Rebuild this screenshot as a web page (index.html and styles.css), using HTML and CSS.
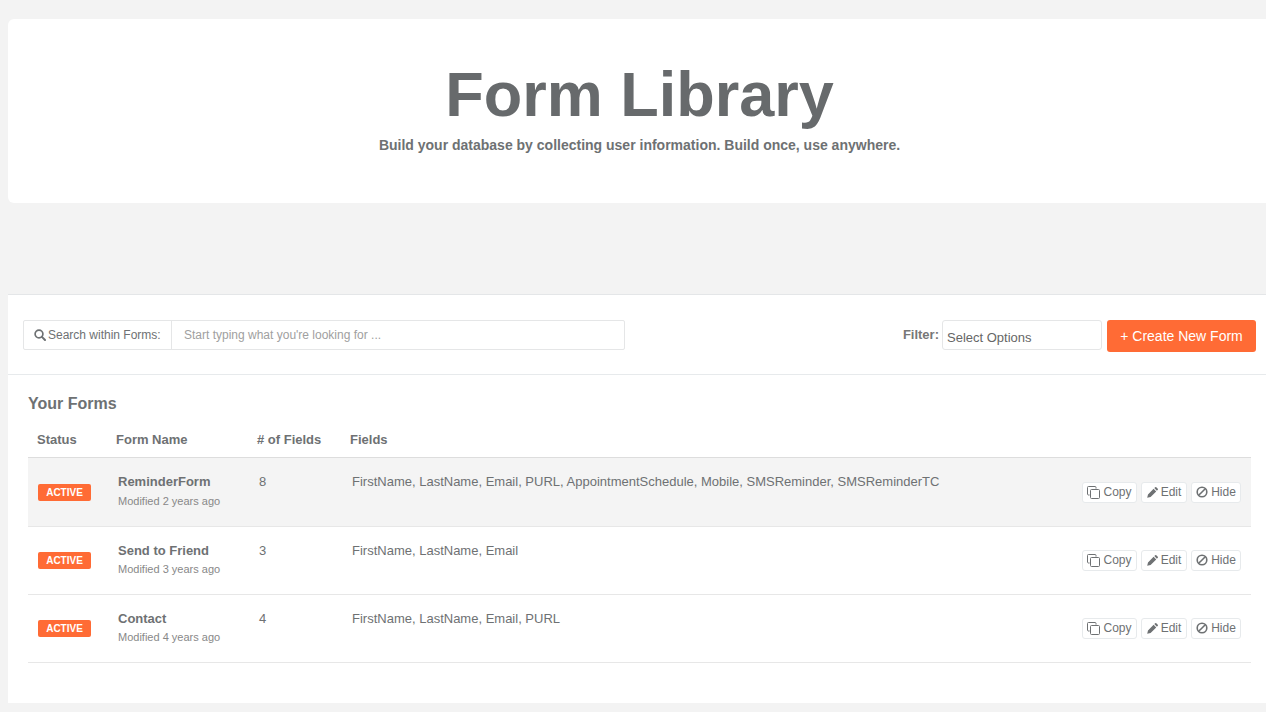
FILE: index.html
```html
<!DOCTYPE html>
<html lang="en">
<head>
<meta charset="utf-8">
<title>Form Library</title>
<link rel="stylesheet" href="styles.css">
</head>
<body>
<svg class="sprites" width="0" height="0" aria-hidden="true">
  <symbol id="i-search" viewBox="0 0 12 12"><circle cx="5" cy="5" r="3.9" fill="none" stroke="currentColor" stroke-width="1.7"/><path d="M7.9 7.9 11 11" fill="none" stroke="currentColor" stroke-width="2" stroke-linecap="round"/></symbol>
  <symbol id="i-copy" viewBox="0 0 13 13"><path d="M9 2.6V1.4a.9.9 0 0 0-.9-.9H1.4a.9.9 0 0 0-.9.9v6.7c0 .5.4.9.9.9h1.2" fill="none" stroke="currentColor"/><rect x="3.5" y="3.5" width="9" height="9" rx="1" fill="none" stroke="currentColor"/></symbol>
  <symbol id="i-edit" viewBox="0 0 12 12"><path d="M8.2 1.2a.8.8 0 0 1 1.1 0l1.5 1.5a.8.8 0 0 1 0 1.1L9.9 4.7 7.3 2.1zM6.6 2.8l2.6 2.6-5.6 5.6-3.4.8.8-3.4z" fill="currentColor"/></symbol>
  <symbol id="i-ban" viewBox="0 0 12 12"><circle cx="6" cy="6" r="4.8" fill="none" stroke="currentColor" stroke-width="1.6"/><path d="M2.7 9.3 9.3 2.7" stroke="currentColor" stroke-width="1.6"/></symbol>
</svg>
<div class="page">
  <header class="hero">
    <h1 class="hero-title">Form Library</h1>
    <p class="hero-sub">Build your database by collecting user information. Build once, use anywhere.</p>
  </header>
  <main class="panel">
    <div class="toolbar">
      <div class="search">
        <label class="search-label"><svg class="ico ico-search"><use href="#i-search"/></svg>Search within Forms:</label>
        <input class="search-input" type="text" placeholder="Start typing what you're looking for ...">
      </div>
      <div class="toolbar-right">
        <span class="filter-label">Filter:</span>
        <div class="filter-select">Select Options</div>
        <button class="create-btn">+ Create New Form</button>
      </div>
    </div>
    <section class="forms">
      <h2 class="forms-title">Your Forms</h2>
      <table class="forms-table">
        <colgroup><col class="c-status"><col class="c-name"><col class="c-count"><col class="c-fields"><col class="c-actions"></colgroup>
        <thead>
          <tr><th>Status</th><th>Form Name</th><th># of Fields</th><th>Fields</th><th></th></tr>
        </thead>
        <tbody>
          <tr class="row-hover">
            <td class="cell-status"><span class="badge">ACTIVE</span></td>
            <td class="cell-name"><div class="form-name">ReminderForm</div><div class="form-mod">Modified 2 years ago</div></td>
            <td class="cell-text">8</td>
            <td class="cell-text">FirstName, LastName, Email, PURL, AppointmentSchedule, Mobile, SMSReminder, SMSReminderTC</td>
            <td class="cell-actions"><div class="actions">
              <button class="act act-copy"><svg class="ico ico-copy"><use href="#i-copy"/></svg>Copy</button>
              <button class="act act-edit"><svg class="ico"><use href="#i-edit"/></svg>Edit</button>
              <button class="act act-hide"><svg class="ico"><use href="#i-ban"/></svg>Hide</button>
            </div></td>
          </tr>
          <tr>
            <td class="cell-status"><span class="badge">ACTIVE</span></td>
            <td class="cell-name"><div class="form-name">Send to Friend</div><div class="form-mod">Modified 3 years ago</div></td>
            <td class="cell-text">3</td>
            <td class="cell-text">FirstName, LastName, Email</td>
            <td class="cell-actions"><div class="actions">
              <button class="act act-copy"><svg class="ico ico-copy"><use href="#i-copy"/></svg>Copy</button>
              <button class="act act-edit"><svg class="ico"><use href="#i-edit"/></svg>Edit</button>
              <button class="act act-hide"><svg class="ico"><use href="#i-ban"/></svg>Hide</button>
            </div></td>
          </tr>
          <tr>
            <td class="cell-status"><span class="badge">ACTIVE</span></td>
            <td class="cell-name"><div class="form-name">Contact</div><div class="form-mod">Modified 4 years ago</div></td>
            <td class="cell-text">4</td>
            <td class="cell-text">FirstName, LastName, Email, PURL</td>
            <td class="cell-actions"><div class="actions">
              <button class="act act-copy"><svg class="ico ico-copy"><use href="#i-copy"/></svg>Copy</button>
              <button class="act act-edit"><svg class="ico"><use href="#i-edit"/></svg>Edit</button>
              <button class="act act-hide"><svg class="ico"><use href="#i-ban"/></svg>Hide</button>
            </div></td>
          </tr>
        </tbody>
      </table>
    </section>
  </main>
</div>
</body>
</html>
```
FILE: styles.css
```css
* { box-sizing: border-box; }
html, body { margin: 0; height: 712px; overflow: hidden; }
body { background: #f3f3f3; font-family: "Liberation Sans", Arial, sans-serif; color: #6e7173; }
.sprites { position: absolute; }
.page { width: 1266px; height: 712px; padding: 19px 0 0 8px; overflow: hidden; }

.hero { width: 1263px; height: 184px; background: #fff; border-radius: 6px; text-align: center; padding-top: 37px; }
.hero-title { margin: 0; font-size: 63px; line-height: 76px; font-weight: 700; color: #676a6c; }
.hero-sub { margin: 5px 0 0; font-size: 14px; line-height: 17px; font-weight: 700; }

.panel { width: 1258px; height: 409px; margin-top: 91px; background: #fff; border-top: 1px solid #e4e6e8; }
.toolbar { height: 80px; display: flex; justify-content: space-between; align-items: flex-start; padding: 25px 10px 0 15px; border-bottom: 1px solid #e7eaec; }
.search { display: flex; width: 602px; height: 30px; border: 1px solid #e5e6e7; border-radius: 2px; }
.search-label { width: 148px; flex: none; display: flex; align-items: center; padding-left: 10px; font-size: 12px; color: #6e7173; border-right: 1px solid #e5e6e7; }
.search-input { flex: 1; min-width: 0; border: 0; outline: 0; padding: 0 12px; font: 12px "Liberation Sans", Arial, sans-serif; background: transparent; }
.search-input::placeholder { color: #a0a0a0; opacity: 1; }
.ico { width: 12px; height: 12px; margin-right: 3px; flex: none; vertical-align: -2px; }
.ico-search { margin-right: 2px; }
.ico-copy { width: 13px; height: 13px; }
.act-edit .ico { margin-right: 2px; }

.toolbar-right { display: flex; align-items: flex-start; }
.filter-label { font-size: 13px; font-weight: 700; line-height: 30px; margin-right: 3px; color: #777; }
.filter-select { width: 160px; height: 30px; border: 1px solid #e5e6e7; border-radius: 3px; padding: 0 4px; font-size: 13px; line-height: 33px; color: #666; }
.create-btn { width: 149px; height: 32px; margin-left: 5px; background: #ff6b35; border: 0; border-radius: 3px; color: #fff; font: 14px "Liberation Sans", Arial, sans-serif; padding: 0; }

.forms { padding: 0 7px 0 20px; }
.forms-title { margin: 19px 0 0; font-size: 16px; line-height: 20px; font-weight: 700; color: #6e7173; }
.forms-table { width: 1223px; margin-top: 12px; border-collapse: collapse; table-layout: fixed; font-size: 13px; }
.c-status { width: 79px; }
.c-name { width: 141px; }
.c-count { width: 93px; }
.c-fields { width: 700px; }
.forms-table th { height: 31px; padding: 0 0 4px 9px; text-align: left; font-size: 13px; font-weight: 700; color: #6e7173; border-bottom: 1px solid #ddd; }
.forms-table td { height: 68px; padding: 0; vertical-align: top; border-bottom: 1px solid #e7e7e7; }
.forms-table .row-hover td { height: 69px; background: #f4f4f4; }
.cell-status { padding: 25px 0 0 10px !important; }
.row-hover .cell-status { padding-top: 26px !important; }
.badge { display: block; width: 53px; height: 17px; background: #ff6b35; border-radius: 2px; color: #fff; font-size: 10px; line-height: 17px; font-weight: 700; text-align: center; }
.cell-name { padding: 15px 0 0 11px !important; }
.form-name { font-size: 13px; line-height: 17px; font-weight: 700; }
.form-mod { margin-top: 3px; font-size: 11px; line-height: 14px; color: #888; }
.row-hover .form-mod { margin-top: 4px; }
.cell-text { padding: 15px 0 0 11px !important; font-size: 13px; line-height: 17px; }
.cell-actions { padding: 23px 10px 0 0 !important; }
.row-hover .cell-actions { padding-top: 24px !important; }
.actions { display: flex; justify-content: flex-end; gap: 4px; }
.act { height: 21px; display: flex; align-items: center; justify-content: center; padding: 0; background: #fff; border: 1px solid #e7eaec; border-radius: 3px; color: #6e7173; font: 12px "Liberation Sans", Arial, sans-serif; }
.act-copy { width: 55px; }
.act-edit { width: 46px; }
.act-hide { width: 50px; }
```
